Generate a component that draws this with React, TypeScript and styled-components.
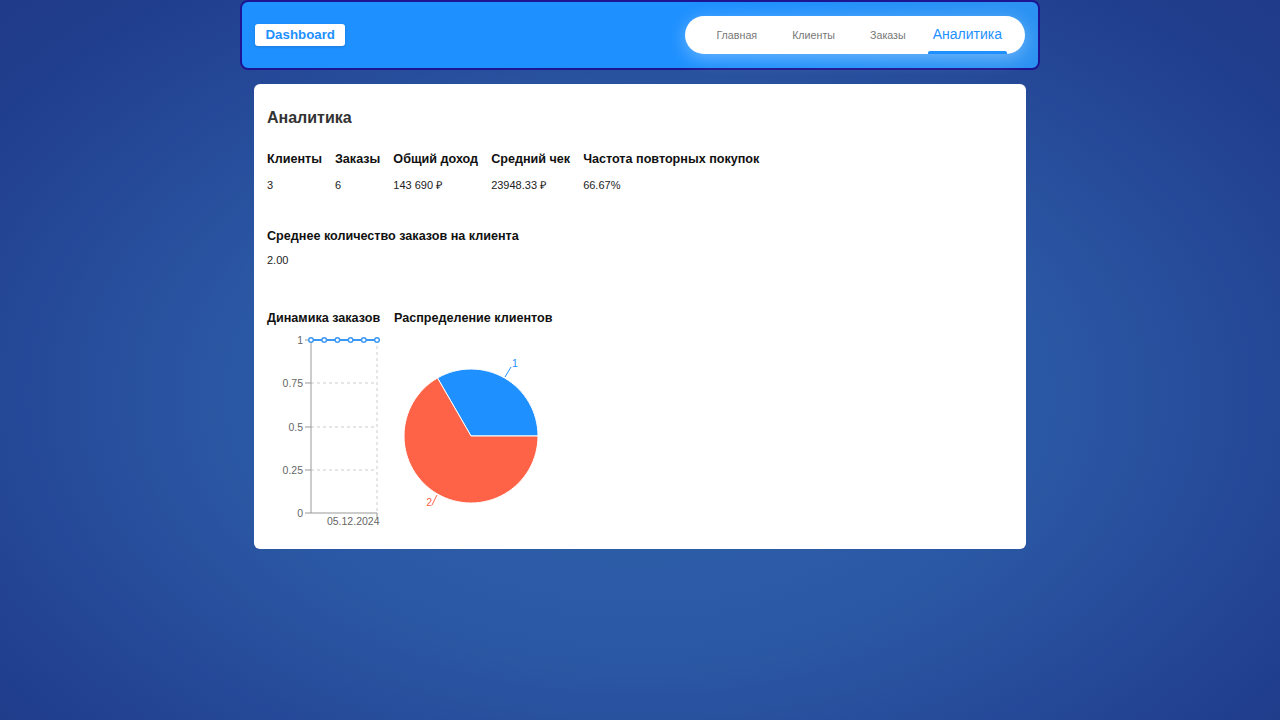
import React from "react";
import styled, { createGlobalStyle } from "styled-components";

const Global = createGlobalStyle`
  html, body { margin: 0; padding: 0; }
  body {
    min-height: 100vh;
    font-family: "Liberation Sans", Arial, sans-serif;
    background: radial-gradient(ellipse 70% 80% at 50% 55%, #3163ad 0%, #2b58a4 45%, #213f8f 85%, #1f3a88 100%);
    background-attachment: fixed;
  }
`;

const Page = styled.div`
  display: flex;
  flex-direction: column;
  align-items: center;
  min-height: 100vh;
`;

const Header = styled.header`
  box-sizing: border-box;
  width: 800px;
  height: 70px;
  border: 2px solid #1c1490;
  border-radius: 8px;
  background: linear-gradient(90deg, #1e90ff 0%, #1e90ff 60%, #2c92f2 100%);
  display: flex;
  align-items: center;
  justify-content: space-between;
  padding: 0 13px;
`;

const Brand = styled.div`
  background: #fff;
  color: #1e90ff;
  font-weight: 700;
  font-size: 13.3px;
  height: 22px;
  line-height: 22px;
  padding: 0 10.5px;
  border-radius: 3px;
  box-shadow: 0 1px 3px rgba(0, 0, 0, 0.15);
`;

const Nav = styled.nav`
  display: flex;
  align-items: stretch;
  height: 38px;
  background: #fff;
  border-radius: 20px;
  padding: 0 18px 0 26px;
  box-shadow: 0 4px 18px rgba(255, 255, 255, 0.35);
`;

const NavLink = styled.a<{ $active?: boolean; $ml: number }>`
  position: relative;
  display: flex;
  align-items: center;
  padding: 0 5px;
  margin-left: ${(p) => p.$ml}px;
  font-size: ${(p) => (p.$active ? "14px" : "10.7px")};
  color: ${(p) => (p.$active ? "#1e90ff" : "#777")};
  text-decoration: none;
  padding-bottom: ${(p) => (p.$active ? "2px" : "0")};
  &::after {
    content: "";
    display: ${(p) => (p.$active ? "block" : "none")};
    position: absolute;
    left: 0;
    right: 0;
    bottom: 0;
    height: 3px;
    border-radius: 2px 2px 0 0;
    background: #1e90ff;
  }
`;

const Card = styled.main`
  box-sizing: border-box;
  width: 772px;
  margin-top: 14px;
  background: #fff;
  border-radius: 6px;
  padding: 14px 13px 18px;
  color: #111;
`;

const Title = styled.h2`
  margin: 10px 0 0;
  font-size: 16px;
  line-height: 20px;
  font-weight: 700;
  color: #333;
`;

const StatsGrid = styled.div`
  display: grid;
  grid-template-columns: repeat(5, auto);
  justify-content: start;
  column-gap: 13px;
  margin-top: 23px;
`;

const Label = styled.div`
  font-size: 12.6px;
  line-height: 16px;
  font-weight: 700;
  color: #111;
  white-space: nowrap;
`;

const Value = styled.div<{ $mt?: number }>`
  font-size: 11px;
  line-height: 14px;
  color: #222;
  margin-top: ${(p) => p.$mt ?? 11}px;
  white-space: nowrap;
`;

const Section = styled.section<{ $mt: number }>`
  margin-top: ${(p) => p.$mt}px;
`;

const ChartsRow = styled.div`
  display: flex;
  gap: 11px;
  margin-top: 43px;
`;

const ChartBox = styled.div`
  display: flex;
  flex-direction: column;
`;

const ChartSvg = styled.svg`
  display: block;
  margin-top: 5px;
  font-family: "Liberation Sans", Arial, sans-serif;
`;

const points = [310, 323.2, 336.4, 349.6, 362.8, 376];

function LineChart() {
  const ox = 266;
  const oy = 331;
  const X = (x: number) => x - ox;
  const Y = (y: number) => y - oy;
  const ticks = [
    { v: "1", y: 340 },
    { v: "0.75", y: 383 },
    { v: "0.5", y: 427 },
    { v: "0.25", y: 470 },
    { v: "0", y: 513 },
  ];
  return (
    <ChartSvg width={116} height={200} viewBox="0 0 116 200">
      {ticks.slice(0, 4).map((t) => (
        <line key={"g" + t.v} x1={X(310)} x2={X(376)} y1={Y(t.y)} y2={Y(t.y)} stroke="#ccc" strokeDasharray="3 3" />
      ))}
      <line x1={X(376)} x2={X(376)} y1={Y(340)} y2={Y(513)} stroke="#ccc" strokeDasharray="3 3" />
      <line x1={X(310)} x2={X(310)} y1={Y(340)} y2={Y(513)} stroke="#999" />
      <line x1={X(310)} x2={X(376)} y1={Y(513)} y2={Y(513)} stroke="#999" />
      {ticks.map((t) => (
        <g key={t.v}>
          <line x1={X(304)} x2={X(310)} y1={Y(t.y)} y2={Y(t.y)} stroke="#999" />
          <text x={X(302)} y={Y(t.y) + 4} fontSize="10.5" fill="#666" textAnchor="end">
            {t.v}
          </text>
        </g>
      ))}
      <line x1={X(376)} x2={X(376)} y1={Y(513)} y2={Y(518)} stroke="#999" />
      <text x={X(378.5)} y={Y(525)} fontSize="10.5" fill="#666" textAnchor="end">
        05.12.2024
      </text>
      <polyline
        points={points.map((p) => `${X(p)},${Y(340)}`).join(" ")}
        fill="none"
        stroke="#3a97f5"
        strokeWidth="2"
      />
      {points.map((p) => (
        <circle key={p} cx={X(p)} cy={Y(340)} r="2.3" fill="#fff" stroke="#3a97f5" strokeWidth="1.4" />
      ))}
    </ChartSvg>
  );
}

function PieChart() {
  const ox = 393;
  const oy = 331;
  const cx = 470 - ox;
  const cy = 436 - oy;
  const r = 67;
  const a = (120 * Math.PI) / 180;
  const ex = cx + r * Math.cos(a);
  const ey = cy - r * Math.sin(a);
  const blue = `M${cx},${cy} L${cx + r},${cy} A${r},${r} 0 0 0 ${ex},${ey} Z`;
  const red = `M${cx},${cy} L${ex},${ey} A${r},${r} 0 1 0 ${cx + r},${cy} Z`;
  return (
    <ChartSvg width={160} height={190} viewBox="0 0 160 190">
      <path d={blue} fill="#1e90ff" stroke="#fff" strokeWidth="1" />
      <path d={red} fill="#ff6347" stroke="#fff" strokeWidth="1" />
      <line x1={504 - ox} y1={377 - oy} x2={510 - ox} y2={367 - oy} stroke="#1e90ff" />
      <text x={511 - ox} y={367 - oy} fontSize="10.5" fill="#1e90ff">
        1
      </text>
      <line x1={436 - ox} y1={495 - oy} x2={431 - ox} y2={505 - oy} stroke="#ff6347" />
      <text x={431 - ox} y={506 - oy} fontSize="10.5" fill="#ff6347" textAnchor="end">
        2
      </text>
    </ChartSvg>
  );
}

const stats = [
  { l: "Клиенты", v: "3" },
  { l: "Заказы", v: "6" },
  { l: "Общий доход", v: "143 690 ₽" },
  { l: "Средний чек", v: "23948.33 ₽" },
  { l: "Частота повторных покупок", v: "66.67%" },
];

const links = [
  { t: "Главная", ml: 0 },
  { t: "Клиенты", ml: 25 },
  { t: "Заказы", ml: 25 },
  { t: "Аналитика", ml: 17, active: true },
];

export default function App() {
  return (
    <>
      <Global />
      <Page>
        <Header>
          <Brand>Dashboard</Brand>
          <Nav>
            {links.map((l) => (
              <NavLink key={l.t} href="#" $ml={l.ml} $active={l.active}>
                {l.t}
              </NavLink>
            ))}
          </Nav>
        </Header>
        <Card>
          <Title>Аналитика</Title>
          <StatsGrid>
            {stats.map((s) => (
              <Label key={s.l}>{s.l}</Label>
            ))}
            {stats.map((s) => (
              <Value key={s.l}>{s.v}</Value>
            ))}
          </StatsGrid>
          <Section $mt={36}>
            <Label>Среднее количество заказов на клиента</Label>
            <Value $mt={9}>2.00</Value>
          </Section>
          <ChartsRow>
            <ChartBox>
              <Label>Динамика заказов</Label>
              <LineChart />
            </ChartBox>
            <ChartBox>
              <Label>Распределение клиентов</Label>
              <PieChart />
            </ChartBox>
          </ChartsRow>
        </Card>
      </Page>
    </>
  );
}
